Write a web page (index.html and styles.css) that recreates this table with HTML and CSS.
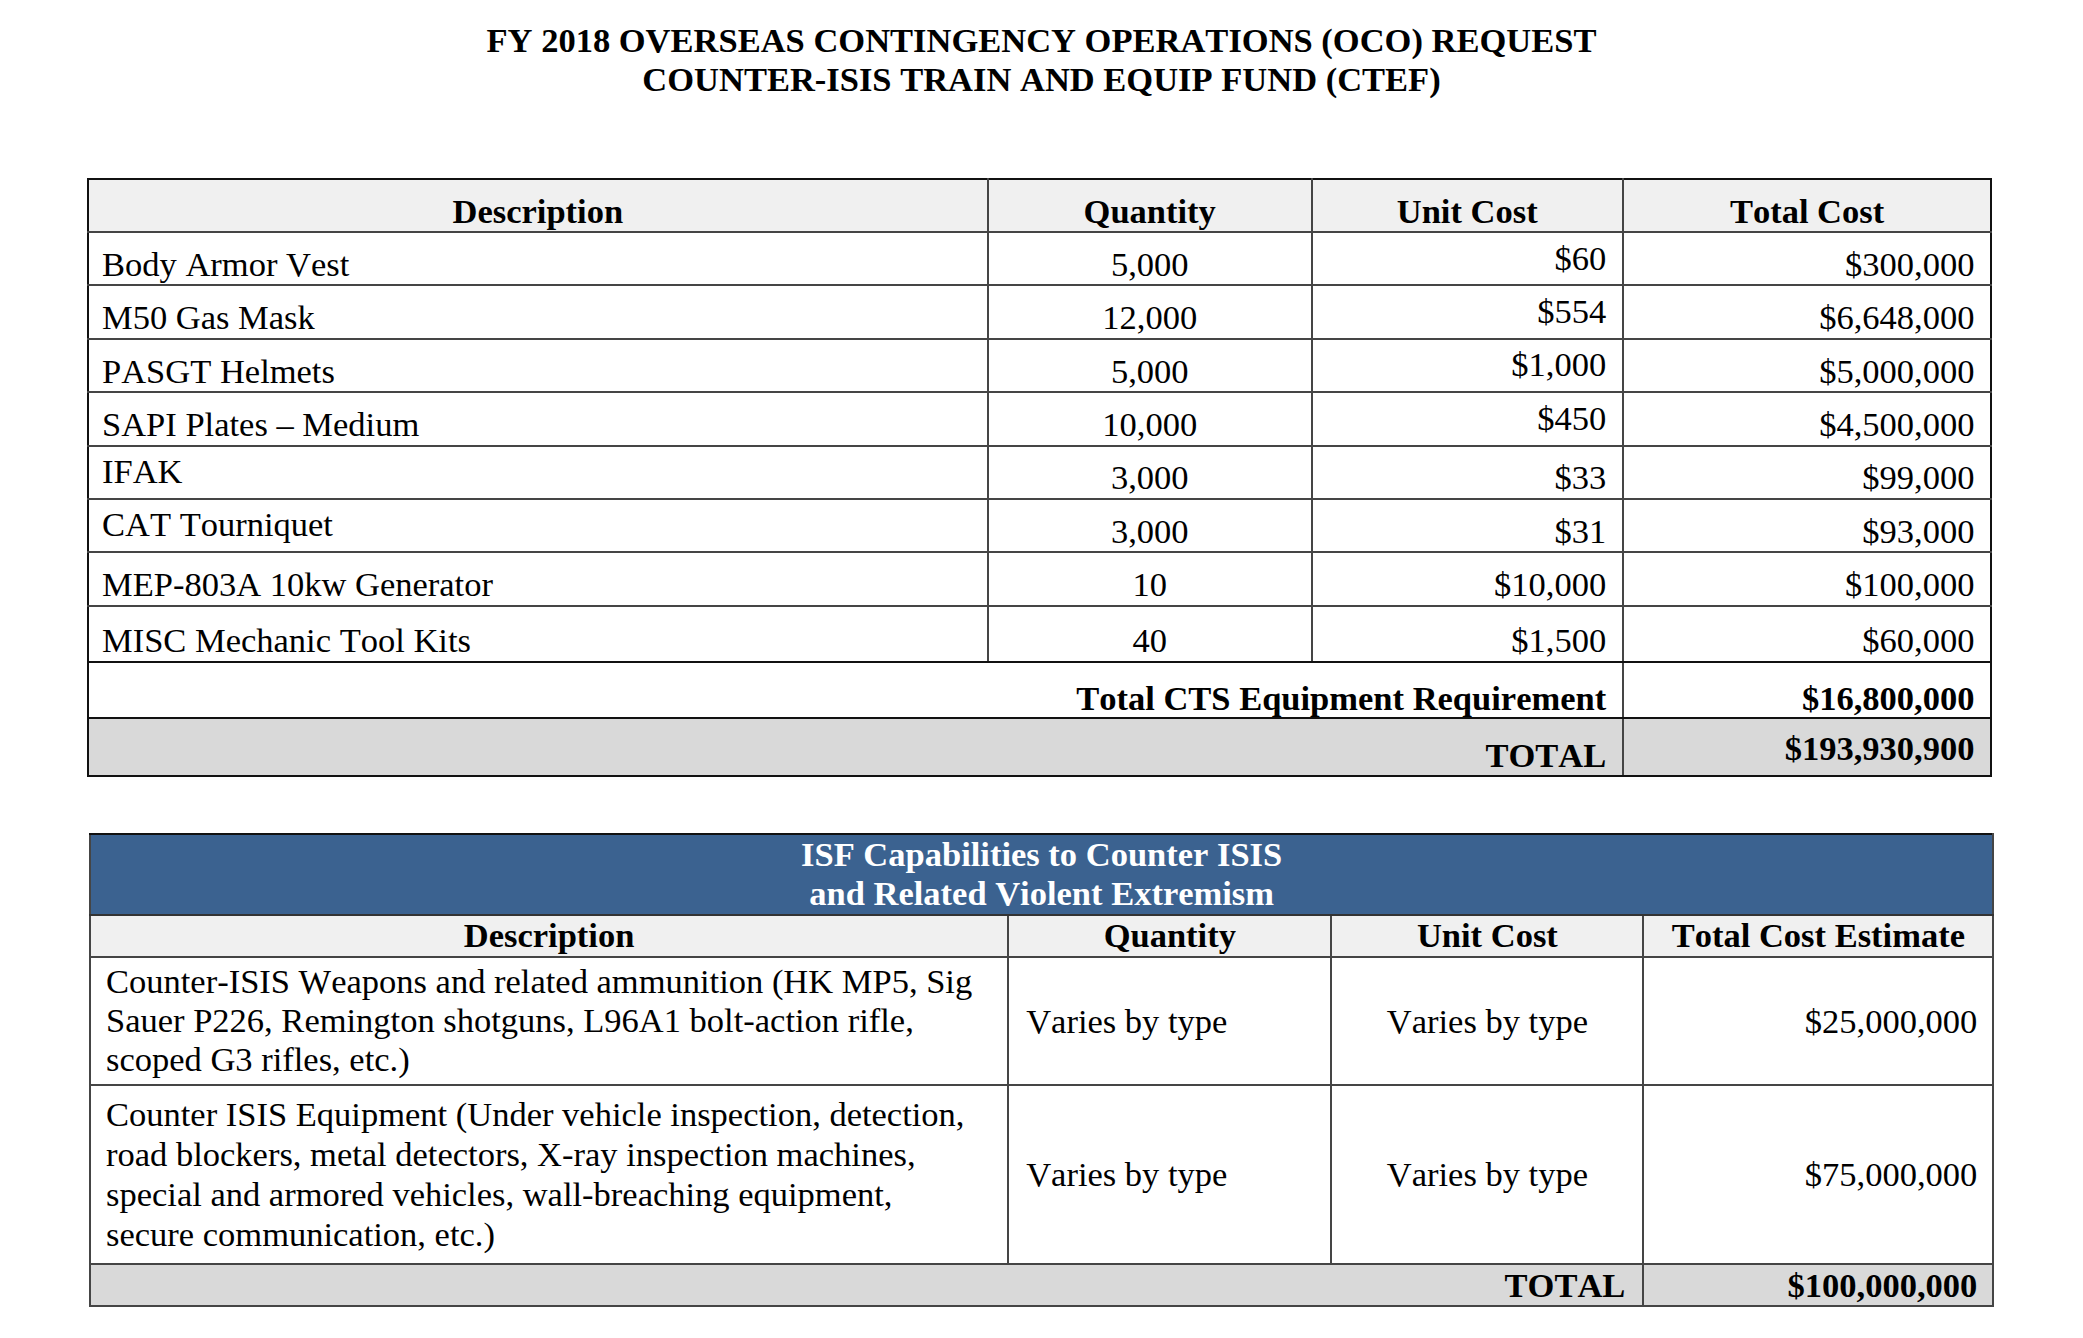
FILE: index.html
```html
<!DOCTYPE html>
<html lang="en">
<head>
<meta charset="utf-8">
<title>FY 2018 OCO Request - CTEF</title>
<link rel="stylesheet" href="styles.css">
</head>
<body>
<div class="page">
  <h1 class="title">FY 2018 OVERSEAS CONTINGENCY OPERATIONS (OCO) REQUEST<br>COUNTER-ISIS TRAIN AND EQUIP FUND (CTEF)</h1>

  <table class="t1">
    <colgroup><col class="a1"><col class="a2"><col class="a3"><col class="a4"></colgroup>
    <thead>
      <tr class="hd"><th>Description</th><th>Quantity</th><th>Unit Cost</th><th>Total Cost</th></tr>
    </thead>
    <tbody>
      <tr class="row"><td class="desc">Body Armor Vest</td><td class="qty">5,000</td><td class="uc raise">$60</td><td class="tc">$300,000</td></tr>
      <tr class="row"><td class="desc">M50 Gas Mask</td><td class="qty">12,000</td><td class="uc raise">$554</td><td class="tc">$6,648,000</td></tr>
      <tr class="row"><td class="desc">PASGT Helmets</td><td class="qty">5,000</td><td class="uc raise">$1,000</td><td class="tc">$5,000,000</td></tr>
      <tr class="row"><td class="desc">SAPI Plates – Medium</td><td class="qty">10,000</td><td class="uc raise">$450</td><td class="tc">$4,500,000</td></tr>
      <tr class="row"><td class="desc raise">IFAK</td><td class="qty">3,000</td><td class="uc">$33</td><td class="tc">$99,000</td></tr>
      <tr class="row"><td class="desc raise">CAT Tourniquet</td><td class="qty">3,000</td><td class="uc">$31</td><td class="tc">$93,000</td></tr>
      <tr class="row"><td class="desc">MEP-803A 10kw Generator</td><td class="qty">10</td><td class="uc">$10,000</td><td class="tc">$100,000</td></tr>
      <tr class="row misc sep"><td class="desc">MISC Mechanic Tool Kits</td><td class="qty">40</td><td class="uc">$1,500</td><td class="tc">$60,000</td></tr>
      <tr class="cts sep"><td class="uc strong" colspan="3">Total CTS Equipment Requirement</td><td class="tc strong">$16,800,000</td></tr>
      <tr class="grand"><td class="uc strong" colspan="3">TOTAL</td><td class="tc strong raise">$193,930,900</td></tr>
    </tbody>
  </table>

  <table class="t2">
    <colgroup><col class="b1"><col class="b2"><col class="b3"><col class="b4"></colgroup>
    <thead>
      <tr class="banner"><th colspan="4">ISF Capabilities to Counter ISIS<br>and Related Violent Extremism</th></tr>
      <tr class="hd"><th>Description</th><th>Quantity</th><th>Unit Cost</th><th>Total Cost Estimate</th></tr>
    </thead>
    <tbody>
      <tr class="r1">
        <td class="desc">Counter-ISIS Weapons and related ammunition (HK MP5, Sig<br>Sauer P226, Remington shotguns, L96A1 bolt-action rifle,<br>scoped G3 rifles, etc.)</td>
        <td class="qty">Varies by type</td>
        <td class="uc">Varies by type</td>
        <td class="tc">$25,000,000</td>
      </tr>
      <tr class="r2">
        <td class="desc">Counter ISIS Equipment (Under vehicle inspection, detection,<br>road blockers, metal detectors, X-ray inspection machines,<br>special and armored vehicles, wall-breaching equipment,<br>secure communication, etc.)</td>
        <td class="qty">Varies by type</td>
        <td class="uc">Varies by type</td>
        <td class="tc">$75,000,000</td>
      </tr>
      <tr class="grand"><td class="gl strong" colspan="3">TOTAL</td><td class="tc strong">$100,000,000</td></tr>
    </tbody>
  </table>
</div>
</body>
</html>
```

FILE: styles.css
```css
* { box-sizing: border-box; }

html, body {
  margin: 0;
  padding: 0;
  background: #ffffff;
}

body {
  font-family: "Liberation Serif", "Times New Roman", serif;
  font-size: 34.5px;
  font-kerning: none;
  color: #000000;
}

.page {
  width: 2083px;
  padding-top: 21px;
}

.title {
  margin: 0;
  font-size: 34.5px;
  font-weight: bold;
  line-height: 38.5px;
  text-align: center;
}

table {
  border-collapse: collapse;
  table-layout: fixed;
}

th, td {
  white-space: nowrap;
  padding: 0;
}

/* ---------- table 1 ---------- */
.t1 {
  margin: 80px 0 0 87px;
  width: 1905px;
  border: 2px solid #111111;
}

.t1 .a1 { width: 899.7px; }
.t1 .a2 { width: 324px; }
.t1 .a3 { width: 311px; }
.t1 .a4 { width: 368.7px; }

.t1 th, .t1 td {
  border: 2px solid #454545;
  line-height: 38px;
  vertical-align: bottom;
  padding-bottom: 1.5px;
}

.t1 tr > :first-child { border-left-color: #111111; }
.t1 tr > :last-child { border-right-color: #111111; }

.t1 .hd { height: 53px; }
.t1 .hd th {
  border-top-color: #111111;
  background: #f0f0f0;
  font-weight: bold;
  text-align: center;
  padding-bottom: 1px;
}

.t1 .row { height: 53.39px; }
.t1 .misc { height: 56px; }
.t1 .cts { height: 56.3px; }
.t1 .grand { height: 57.7px; }

.t1 .sep td { border-bottom-color: #111111; }
.t1 .cts td { padding-bottom: 0; }
.t1 .grand td {
  background: #d9d9d9;
  border-bottom-color: #111111;
  padding-bottom: 0.7px;
}

.t1 .desc { text-align: left; padding-left: 13px; }
.t1 .qty { text-align: center; }
.t1 .uc { text-align: right; padding-right: 15.5px; }
.t1 .tc { text-align: right; padding-right: 16px; }
.t1 td.raise { padding-bottom: 7.8px; }

.strong { font-weight: bold; }

/* ---------- table 2 ---------- */
.t2 {
  margin: 56px 0 0 89px;
  width: 1905px;
  border: 2px solid #454545;
}

.t2 .b1 { width: 918.2px; }
.t2 .b2 { width: 323.2px; }
.t2 .b3 { width: 312px; }
.t2 .b4 { width: 349.9px; }

.t2 th, .t2 td {
  border: 2px solid #454545;
  line-height: 38px;
}

.t2 .banner { height: 81px; }
.t2 .banner th {
  border-top-color: #111111;
  border-bottom-color: #333333;
  background: #3b6290;
  color: #ffffff;
  font-weight: bold;
  line-height: 39.5px;
  text-align: center;
  vertical-align: middle;
}

.t2 .hd { height: 42px; }
.t2 .hd th {
  background: #f0f0f0;
  font-weight: bold;
  text-align: center;
  vertical-align: bottom;
  padding-bottom: 2px;
}

.t2 .r1 { height: 128px; }
.t2 .r2 { height: 179px; }
.t2 .r1 td, .t2 .r2 td { vertical-align: middle; }
.t2 .r1 .desc { line-height: 39px; }
.t2 .r2 .desc { line-height: 40px; }

.t2 .desc { text-align: left; padding-left: 15px; }
.t2 .qty { text-align: left; padding-left: 17px; }
.t2 .uc { text-align: center; }
.t2 .tc { text-align: right; padding-right: 15px; }

.t2 .grand { height: 42px; }
.t2 .grand td {
  background: #d9d9d9;
  vertical-align: bottom;
  padding-bottom: 1px;
}
.t2 .gl { text-align: right; padding-right: 17px; }
```
